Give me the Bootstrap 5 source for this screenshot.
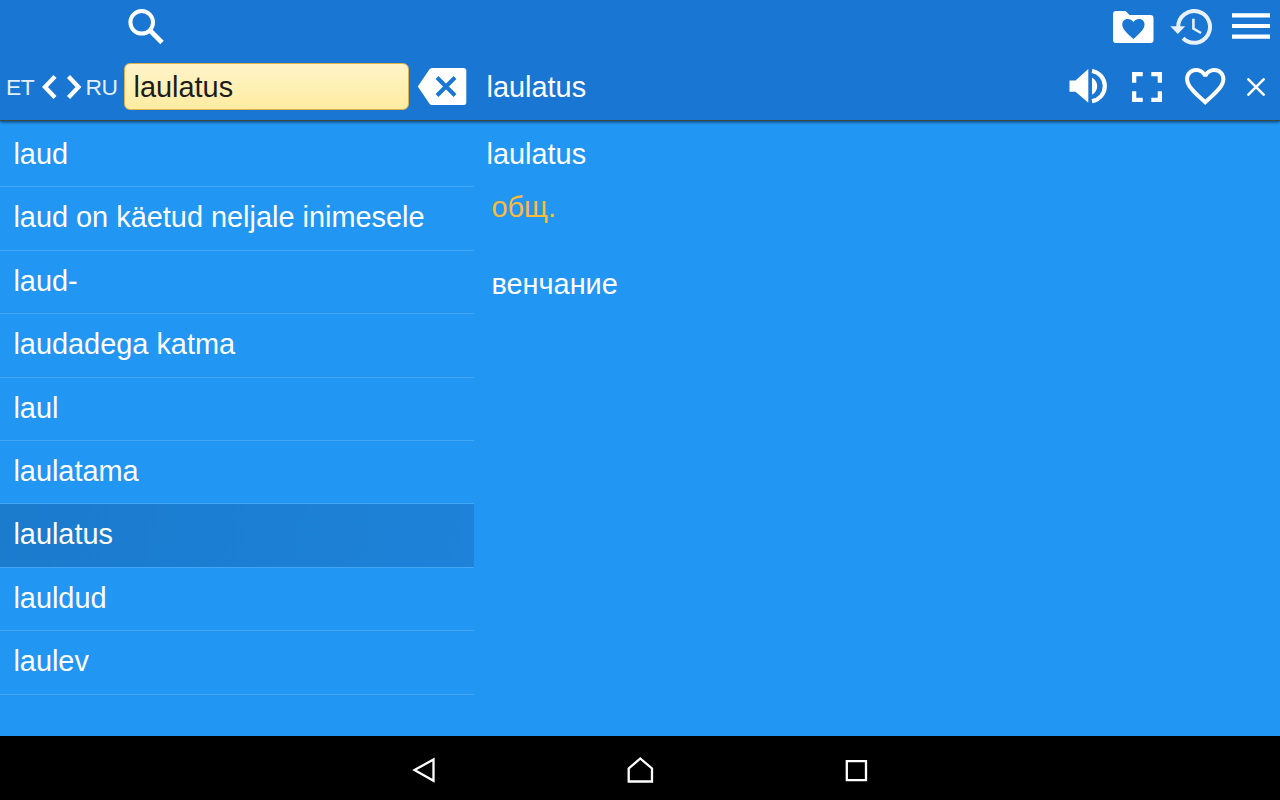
<!DOCTYPE html>
<html lang="et">
<head>
    <meta charset="UTF-8">
    <meta name="viewport" content="width=device-width, initial-scale=1.0">
    <title>laulatus</title>
    <link href="https://cdn.jsdelivr.net/npm/bootstrap@5.3.2/dist/css/bootstrap.min.css" rel="stylesheet">
    <style>
        body {
            background-color: #2196f3;
            font-family: "Liberation Sans", Arial, sans-serif;
            font-size: 28.9px;
            line-height: 32px;
        }
        svg {
            display: block;
            flex-shrink: 0;
        }
        .app-header {
            height: 121px;
            background-color: #1976d2;
            box-shadow: 0 1px 3px rgba(0, 0, 0, 0.6);
            border-bottom: 1px solid #3c4b46;
        }
        .bar-top {
            height: 53px;
            padding: 0 10px 0 126px;
        }
        .bar-search {
            height: 67px;
            padding-right: 14.8px;
        }
        .search-side {
            width: 486.5px;
            padding-left: 6px;
        }
        .lang {
            width: 28.5px;
            font-size: 22.8px;
            letter-spacing: -0.4px;
            color: #e3effb;
        }
        .lang-to {
            width: 32px;
        }
        .swap {
            margin: 0 5px 0 6px;
        }
        .search-input {
            width: 285px;
            height: 47px;
            margin-left: 6.5px;
            padding: 2px 9px 0 8.5px;
            color: #1c1c1c;
            border: 1px solid #dcb04a;
            border-radius: 6px;
            background: linear-gradient(#fff4ca, #ffeca0);
        }
        .history-icon {
            margin: 0 20px 0 16.5px;
        }
        .expand-icon {
            margin: 0 23px 0 25.5px;
        }
        .close-icon {
            margin-left: 21.5px;
        }
        .word-list {
            width: 474px;
            padding-top: 3px;
        }
        .word-list .list-group-item {
            height: 63.4px;
            padding: 0 13px 2.4px 13.4px;
            background: none;
            border-color: #43a6f5;
            border-width: 0 0 1px !important;
        }
        .word-list .list-group-item.active {
            background: linear-gradient(100deg, #1b7bcd, #1d82d8);
            margin-top: 0;
            padding-bottom: 3px;
        }
        .article {
            padding: 17px 0 0 12.5px;
        }
        .article-body {
            padding: 21px 0 0 5px;
        }
        .article-label {
            color: #f9bb3c;
            margin-bottom: 45px;
        }
        .android-nav {
            height: 64px;
            padding-top: 4px;
        }
    </style>
</head>
<body>
    <div class="d-flex flex-column vh-100 overflow-hidden">
        <header class="app-header position-relative text-white">
            <div class="bar-top d-flex align-items-center">
                <svg width="40" height="40" viewBox="0 0 40 40" fill="none" stroke="#fff">
                    <circle cx="15.7" cy="15.3" r="11.3" stroke-width="4"/>
                    <path d="M24 23.5l12 12" stroke-width="4.8"/>
                </svg>
                <div class="d-flex align-items-center ms-auto">
                    <!-- favourites folder -->
                    <svg width="40.5" height="32" viewBox="0 0 40.5 32" fill="#fff">
                        <path fill-rule="evenodd" d="M3 0H12.5L16.5 4H37.5Q40.5 4 40.5 7V29Q40.5 32 37.5 32H3Q0 32 0 29V3Q0 0 3 0zM20.4 28l-1.7-1.5C12.6 21 9.3 17.7 9.3 13.5C9.3 10.2 11.6 8 14.6 8C17 8 19 9.1 20.4 10.9C21.8 9.1 23.8 8 26.2 8C29.2 8 31.5 10.2 31.5 13.5C31.5 17.7 28.2 21 22.1 26.5z"/>
                    </svg>
                    <!-- history -->
                    <svg class="history-icon" width="42" height="36" viewBox="0 0 42 36" fill="none" stroke="#e8f1fb">
                        <path stroke-width="4" d="M8.2 18A15.9 15.9 0 1 1 13 29.3"/>
                        <path stroke="none" fill="#e8f1fb" d="M.3 17.3H15.2L7.8 25z"/>
                        <path stroke-width="2.6" d="M23.4 9.7V19.5L31 24"/>
                    </svg>
                    <!-- menu -->
                    <svg width="38" height="27" viewBox="0 0 38 27" fill="#fff">
                        <path d="M0 .3h38v4.2H0zM0 10.9h38v4.2H0zM0 21.5h38v4.2H0z"/>
                    </svg>
                </div>
            </div>
            <div class="bar-search d-flex align-items-center">
                <div class="search-side d-flex align-items-center flex-shrink-0">
                    <span class="lang">ET</span>
                    <svg class="swap" width="40" height="24" viewBox="0 0 40 24" fill="none" stroke="#fff" stroke-width="4.3">
                        <path d="M14 1.5L4 12l10 10.5M27.500 1.5L37.500 12 27.500 22.5"/>
                    </svg>
                    <span class="lang lang-to">RU</span>
                    <input type="text" class="search-input" value="laulatus">
                    <svg class="ms-2" width="50" height="37" viewBox="0 0 50 37">
                        <path fill="#fff" d="M15 0H46.5Q49.3 0 49.3 2.5V34.5Q49.3 37 46.5 37H15Q13.3 37 12.3 35.5L.8 18.5 12.3 1.5Q13.3 0 15 0z"/>
                        <path stroke="#1976d2" stroke-width="4" d="M20 9.5l18 18M38 9.5l-18 18"/>
                    </svg>
                </div>
                <span>laulatus</span>
                <div class="d-flex align-items-center ms-auto">
                    <!-- speaker -->
                    <svg width="37.3" height="36.4" viewBox="0 0 37.3 36.4">
                        <path fill="#fff" d="M.5 12.4H6.500L19.300 .9V34.700L6.500 23.800H.5zM23 9.400C30 13.200 30 23 23 26.800z"/>
                        <path fill="none" stroke="#fff" stroke-width="4.2" d="M23 3A15.3 15.3 0 0 1 23 33.2"/>
                    </svg>
                    <!-- full screen -->
                    <svg class="expand-icon" width="30" height="30" viewBox="5 5 14 14" fill="#fff">
                        <path d="M7 14H5v5h5v-2H7v-3zm-2-4h2V7h3V5H5v5zm12 7h-3v2h5v-5h-2v3zM14 5v2h3v3h2V5h-5z"/>
                    </svg>
                    <!-- favourite -->
                    <svg width="40.5" height="37" viewBox="2 3 20 18.35" fill="#fff">
                        <path d="M16.5 3c-1.74 0-3.41.81-4.5 2.09C10.91 3.81 9.24 3 7.5 3 4.42 3 2 5.42 2 8.5c0 3.78 3.4 6.86 8.55 11.54L12 21.35l1.45-1.32C18.6 15.36 22 12.28 22 8.5 22 5.42 19.58 3 16.5 3zm-4.4 15.55l-.1.1-.1-.1C7.14 14.24 4 11.39 4 8.5 4 6.5 5.5 5 7.5 5c1.54 0 3.04.99 3.57 2.36h1.87C13.46 5.99 14.96 5 16.5 5c2 0 3.5 1.5 3.5 3.5 0 2.89-3.14 5.74-7.9 10.05z"/>
                    </svg>
                    <svg class="close-icon" width="18" height="18" viewBox="0 0 18 18" stroke="#fff" stroke-width="2.5">
                        <path d="M.5.5l17 17M17.5.5l-17 17"/>
                    </svg>
                </div>
            </div>
        </header>
        <main class="d-flex flex-grow-1 text-white">
            <ul class="word-list list-group list-group-flush">
                <li class="list-group-item text-white d-flex align-items-center">laud</li>
                <li class="list-group-item text-white d-flex align-items-center">laud on käetud neljale inimesele</li>
                <li class="list-group-item text-white d-flex align-items-center">laud-</li>
                <li class="list-group-item text-white d-flex align-items-center">laudadega katma</li>
                <li class="list-group-item text-white d-flex align-items-center">laul</li>
                <li class="list-group-item text-white d-flex align-items-center">laulatama</li>
                <li class="list-group-item text-white d-flex align-items-center active">laulatus</li>
                <li class="list-group-item text-white d-flex align-items-center">lauldud</li>
                <li class="list-group-item text-white d-flex align-items-center">laulev</li>
            </ul>
            <section class="article" lang="ru">
                <div>laulatus</div>
                <div class="article-body">
                    <div class="article-label">общ.</div>
                    <div>венчание</div>
                </div>
            </section>
        </main>
        <footer class="android-nav bg-black d-flex justify-content-center align-items-center">
            <svg width="456" height="28" viewBox="412 756 456 28" fill="none" stroke="#fff" stroke-width="2.3">
                <path d="M414.5 770L433.5 759.5V780.8z"/>
                <path d="M640.3 758.5L652 768.5V781.5H628.7V768.5z"/>
                <path d="M846.8 761.2h19.2v19h-19.2z"/>
            </svg>
        </footer>
    </div>
    <script src="https://cdn.jsdelivr.net/npm/bootstrap@5.3.2/dist/js/bootstrap.bundle.min.js"></script>
</body>
</html>
